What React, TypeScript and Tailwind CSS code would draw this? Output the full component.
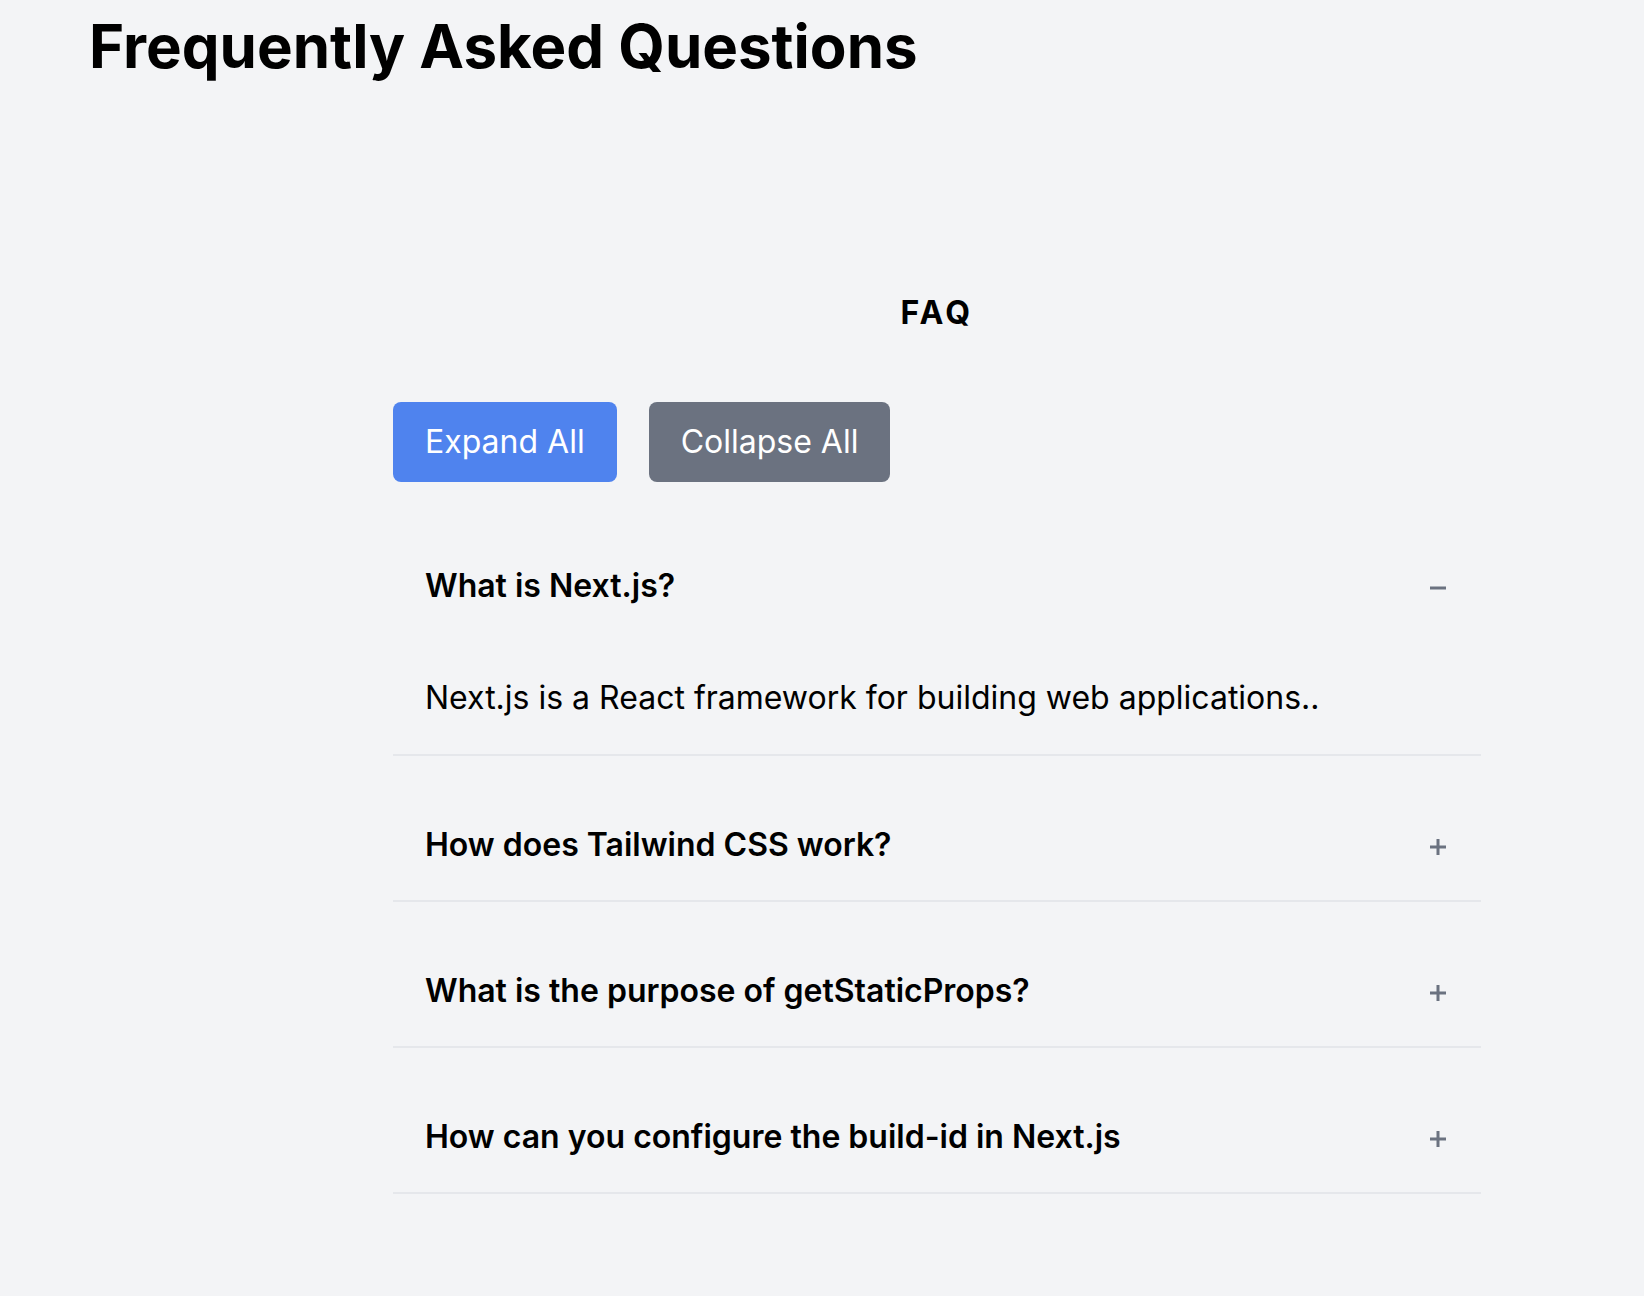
import React, { useState } from "react";

const faqs = [
  { q: "What is Next.js?", a: "Next.js is a React framework for building web applications.." },
  { q: "How does Tailwind CSS work?", a: "Tailwind CSS is a utility-first CSS framework." },
  { q: "What is the purpose of getStaticProps?", a: "getStaticProps fetches data at build time." },
  { q: "How can you configure the build-id in Next.js", a: "You can configure generateBuildId in next.config.js." },
];

function Icon({ open }: { open: boolean }) {
  return (
    <svg width="16" height="16" viewBox="0 0 16 16" className="shrink-0 mt-[3px] mr-[3px]">
      <rect x="0" y="6.5" width="16" height="3" fill="#6b7280" />
      {!open && <rect x="6.5" y="0" width="3" height="16" fill="#6b7280" />}
    </svg>
  );
}

export default function App() {
  const [open, setOpen] = useState<boolean[]>([true, false, false, false]);
  return (
    <div className="min-h-screen bg-[#f3f4f6] text-black" style={{ fontFamily: "Inter, 'Noto Sans', sans-serif" }}>
      <h1 className="pl-[89px] pt-[10px] text-[60px] leading-[72px] font-bold">Frequently Asked Questions</h1>
      <div className="ml-[393px] w-[1088px] mt-[207px]">
        <h2 className="text-center text-[32px] leading-[48px] font-bold tracking-[0.1em]">FAQ</h2>
        <div className="mt-[65px] flex gap-[32px]">
          <button
            onClick={() => setOpen(open.map(() => true))}
            className="h-[80px] px-[32px] rounded-[8px] bg-[#4f83ee] text-white text-[32px] leading-[48px]"
          >
            Expand All
          </button>
          <button
            onClick={() => setOpen(open.map(() => false))}
            className="h-[80px] px-[32px] rounded-[8px] bg-[#6b7280] text-white text-[32px] leading-[48px]"
          >
            Collapse All
          </button>
        </div>
        <div className="mt-[15px]">
          {faqs.map((f, i) => (
            <div key={i} className="pt-[32px] border-b-2 border-[#e5e7eb]">
              <div
                className="flex items-center justify-between px-[32px] pt-[33px] pb-[31px] cursor-pointer"
                onClick={() => setOpen(open.map((o, j) => (j === i ? !o : o)))}
              >
                <span className="text-[32px] leading-[48px] font-semibold">{f.q}</span>
                <Icon open={open[i]} />
              </div>
              {open[i] && (
                <div className="px-[32px] pt-[33px] pb-[32px] text-[32px] leading-[48px]">{f.a}</div>
              )}
            </div>
          ))}
        </div>
      </div>
    </div>
  );
}
